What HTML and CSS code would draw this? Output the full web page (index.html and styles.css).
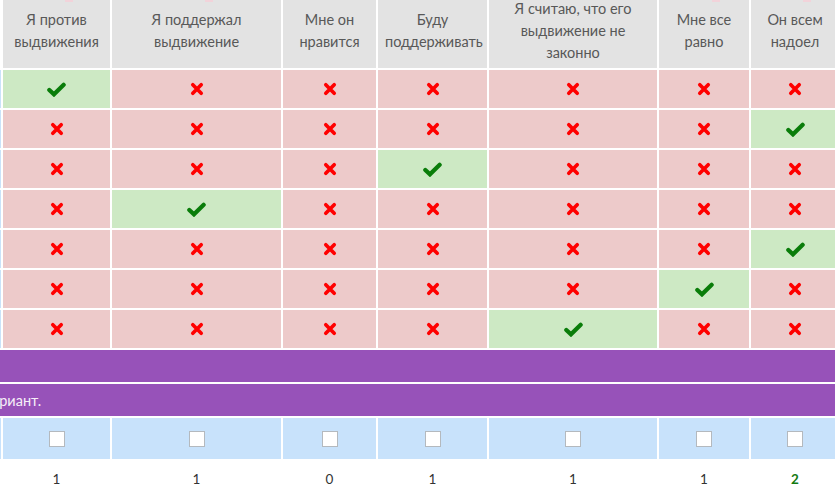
FILE: index.html
```html
<!DOCTYPE html>
<html lang="ru">
<head>
<meta charset="utf-8">
<title>Голосование</title>
<link rel="stylesheet" href="styles.css">
</head>
<body>
<div class="viewport">
<table class="poll">
  <colgroup>
    <col class="c-label">
    <col class="c1"><col class="c2"><col class="c3"><col class="c4"><col class="c5"><col class="c6"><col class="c7">
  </colgroup>
  <thead>
    <tr>
      <th class="label-head"></th>
      <th><div class="mark"><span></span></div>Я против выдвижения</th>
      <th><div class="mark"><span></span></div>Я поддержал выдвижение</th>
      <th>Мне он нравится</th>
      <th>Буду поддерживать</th>
      <th>Я считаю, что его выдвижение не законно</th>
      <th><div class="mark"><span></span></div>Мне все равно</th>
      <th><div class="mark"><span></span></div>Он всем надоел</th>
    </tr>
  </thead>
  <tbody>
    <tr>
      <td class="label"></td>
      <td class="yes"><svg class="ic-check" viewBox="0 0 18 14"><path d="M2.2 7.4 L6.6 11.6 L15.8 2.6"/></svg></td>
      <td class="no"><svg class="ic-x" viewBox="0 0 14 14"><path d="M2.8 2.8 L11.2 11.2 M11.2 2.8 L2.8 11.2"/></svg></td>
      <td class="no"><svg class="ic-x" viewBox="0 0 14 14"><path d="M2.8 2.8 L11.2 11.2 M11.2 2.8 L2.8 11.2"/></svg></td>
      <td class="no"><svg class="ic-x" viewBox="0 0 14 14"><path d="M2.8 2.8 L11.2 11.2 M11.2 2.8 L2.8 11.2"/></svg></td>
      <td class="no"><svg class="ic-x" viewBox="0 0 14 14"><path d="M2.8 2.8 L11.2 11.2 M11.2 2.8 L2.8 11.2"/></svg></td>
      <td class="no"><svg class="ic-x" viewBox="0 0 14 14"><path d="M2.8 2.8 L11.2 11.2 M11.2 2.8 L2.8 11.2"/></svg></td>
      <td class="no"><svg class="ic-x" viewBox="0 0 14 14"><path d="M2.8 2.8 L11.2 11.2 M11.2 2.8 L2.8 11.2"/></svg></td>
    </tr>
    <tr>
      <td class="label"></td>
      <td class="no"><svg class="ic-x" viewBox="0 0 14 14"><path d="M2.8 2.8 L11.2 11.2 M11.2 2.8 L2.8 11.2"/></svg></td>
      <td class="no"><svg class="ic-x" viewBox="0 0 14 14"><path d="M2.8 2.8 L11.2 11.2 M11.2 2.8 L2.8 11.2"/></svg></td>
      <td class="no"><svg class="ic-x" viewBox="0 0 14 14"><path d="M2.8 2.8 L11.2 11.2 M11.2 2.8 L2.8 11.2"/></svg></td>
      <td class="no"><svg class="ic-x" viewBox="0 0 14 14"><path d="M2.8 2.8 L11.2 11.2 M11.2 2.8 L2.8 11.2"/></svg></td>
      <td class="no"><svg class="ic-x" viewBox="0 0 14 14"><path d="M2.8 2.8 L11.2 11.2 M11.2 2.8 L2.8 11.2"/></svg></td>
      <td class="no"><svg class="ic-x" viewBox="0 0 14 14"><path d="M2.8 2.8 L11.2 11.2 M11.2 2.8 L2.8 11.2"/></svg></td>
      <td class="yes"><svg class="ic-check" viewBox="0 0 18 14"><path d="M2.2 7.4 L6.6 11.6 L15.8 2.6"/></svg></td>
    </tr>
    <tr>
      <td class="label"></td>
      <td class="no"><svg class="ic-x" viewBox="0 0 14 14"><path d="M2.8 2.8 L11.2 11.2 M11.2 2.8 L2.8 11.2"/></svg></td>
      <td class="no"><svg class="ic-x" viewBox="0 0 14 14"><path d="M2.8 2.8 L11.2 11.2 M11.2 2.8 L2.8 11.2"/></svg></td>
      <td class="no"><svg class="ic-x" viewBox="0 0 14 14"><path d="M2.8 2.8 L11.2 11.2 M11.2 2.8 L2.8 11.2"/></svg></td>
      <td class="yes"><svg class="ic-check" viewBox="0 0 18 14"><path d="M2.2 7.4 L6.6 11.6 L15.8 2.6"/></svg></td>
      <td class="no"><svg class="ic-x" viewBox="0 0 14 14"><path d="M2.8 2.8 L11.2 11.2 M11.2 2.8 L2.8 11.2"/></svg></td>
      <td class="no"><svg class="ic-x" viewBox="0 0 14 14"><path d="M2.8 2.8 L11.2 11.2 M11.2 2.8 L2.8 11.2"/></svg></td>
      <td class="no"><svg class="ic-x" viewBox="0 0 14 14"><path d="M2.8 2.8 L11.2 11.2 M11.2 2.8 L2.8 11.2"/></svg></td>
    </tr>
    <tr>
      <td class="label"></td>
      <td class="no"><svg class="ic-x" viewBox="0 0 14 14"><path d="M2.8 2.8 L11.2 11.2 M11.2 2.8 L2.8 11.2"/></svg></td>
      <td class="yes"><svg class="ic-check" viewBox="0 0 18 14"><path d="M2.2 7.4 L6.6 11.6 L15.8 2.6"/></svg></td>
      <td class="no"><svg class="ic-x" viewBox="0 0 14 14"><path d="M2.8 2.8 L11.2 11.2 M11.2 2.8 L2.8 11.2"/></svg></td>
      <td class="no"><svg class="ic-x" viewBox="0 0 14 14"><path d="M2.8 2.8 L11.2 11.2 M11.2 2.8 L2.8 11.2"/></svg></td>
      <td class="no"><svg class="ic-x" viewBox="0 0 14 14"><path d="M2.8 2.8 L11.2 11.2 M11.2 2.8 L2.8 11.2"/></svg></td>
      <td class="no"><svg class="ic-x" viewBox="0 0 14 14"><path d="M2.8 2.8 L11.2 11.2 M11.2 2.8 L2.8 11.2"/></svg></td>
      <td class="no"><svg class="ic-x" viewBox="0 0 14 14"><path d="M2.8 2.8 L11.2 11.2 M11.2 2.8 L2.8 11.2"/></svg></td>
    </tr>
    <tr>
      <td class="label"></td>
      <td class="no"><svg class="ic-x" viewBox="0 0 14 14"><path d="M2.8 2.8 L11.2 11.2 M11.2 2.8 L2.8 11.2"/></svg></td>
      <td class="no"><svg class="ic-x" viewBox="0 0 14 14"><path d="M2.8 2.8 L11.2 11.2 M11.2 2.8 L2.8 11.2"/></svg></td>
      <td class="no"><svg class="ic-x" viewBox="0 0 14 14"><path d="M2.8 2.8 L11.2 11.2 M11.2 2.8 L2.8 11.2"/></svg></td>
      <td class="no"><svg class="ic-x" viewBox="0 0 14 14"><path d="M2.8 2.8 L11.2 11.2 M11.2 2.8 L2.8 11.2"/></svg></td>
      <td class="no"><svg class="ic-x" viewBox="0 0 14 14"><path d="M2.8 2.8 L11.2 11.2 M11.2 2.8 L2.8 11.2"/></svg></td>
      <td class="no"><svg class="ic-x" viewBox="0 0 14 14"><path d="M2.8 2.8 L11.2 11.2 M11.2 2.8 L2.8 11.2"/></svg></td>
      <td class="yes"><svg class="ic-check" viewBox="0 0 18 14"><path d="M2.2 7.4 L6.6 11.6 L15.8 2.6"/></svg></td>
    </tr>
    <tr>
      <td class="label"></td>
      <td class="no"><svg class="ic-x" viewBox="0 0 14 14"><path d="M2.8 2.8 L11.2 11.2 M11.2 2.8 L2.8 11.2"/></svg></td>
      <td class="no"><svg class="ic-x" viewBox="0 0 14 14"><path d="M2.8 2.8 L11.2 11.2 M11.2 2.8 L2.8 11.2"/></svg></td>
      <td class="no"><svg class="ic-x" viewBox="0 0 14 14"><path d="M2.8 2.8 L11.2 11.2 M11.2 2.8 L2.8 11.2"/></svg></td>
      <td class="no"><svg class="ic-x" viewBox="0 0 14 14"><path d="M2.8 2.8 L11.2 11.2 M11.2 2.8 L2.8 11.2"/></svg></td>
      <td class="no"><svg class="ic-x" viewBox="0 0 14 14"><path d="M2.8 2.8 L11.2 11.2 M11.2 2.8 L2.8 11.2"/></svg></td>
      <td class="yes"><svg class="ic-check" viewBox="0 0 18 14"><path d="M2.2 7.4 L6.6 11.6 L15.8 2.6"/></svg></td>
      <td class="no"><svg class="ic-x" viewBox="0 0 14 14"><path d="M2.8 2.8 L11.2 11.2 M11.2 2.8 L2.8 11.2"/></svg></td>
    </tr>
    <tr>
      <td class="label"></td>
      <td class="no"><svg class="ic-x" viewBox="0 0 14 14"><path d="M2.8 2.8 L11.2 11.2 M11.2 2.8 L2.8 11.2"/></svg></td>
      <td class="no"><svg class="ic-x" viewBox="0 0 14 14"><path d="M2.8 2.8 L11.2 11.2 M11.2 2.8 L2.8 11.2"/></svg></td>
      <td class="no"><svg class="ic-x" viewBox="0 0 14 14"><path d="M2.8 2.8 L11.2 11.2 M11.2 2.8 L2.8 11.2"/></svg></td>
      <td class="no"><svg class="ic-x" viewBox="0 0 14 14"><path d="M2.8 2.8 L11.2 11.2 M11.2 2.8 L2.8 11.2"/></svg></td>
      <td class="yes"><svg class="ic-check" viewBox="0 0 18 14"><path d="M2.2 7.4 L6.6 11.6 L15.8 2.6"/></svg></td>
      <td class="no"><svg class="ic-x" viewBox="0 0 14 14"><path d="M2.8 2.8 L11.2 11.2 M11.2 2.8 L2.8 11.2"/></svg></td>
      <td class="no"><svg class="ic-x" viewBox="0 0 14 14"><path d="M2.8 2.8 L11.2 11.2 M11.2 2.8 L2.8 11.2"/></svg></td>
    </tr>
    <tr class="band">
      <td colspan="8"></td>
    </tr>
    <tr class="band">
      <td colspan="8" class="band-text">Выберите один вариант.</td>
    </tr>
    <tr class="choose">
      <td class="label"></td>
      <td><input type="checkbox" class="box"></td>
      <td><input type="checkbox" class="box"></td>
      <td><input type="checkbox" class="box"></td>
      <td><input type="checkbox" class="box"></td>
      <td><input type="checkbox" class="box"></td>
      <td><input type="checkbox" class="box"></td>
      <td><input type="checkbox" class="box"></td>
    </tr>
    <tr class="totals">
      <td class="blank"></td>
      <td>1</td><td>1</td><td>0</td><td>1</td><td>1</td><td>1</td><td class="lead">2</td>
    </tr>
  </tbody>
</table>
</div>
</body>
</html>
```

FILE: styles.css
```css
html, body {
  margin: 0;
  padding: 0;
  background: #ffffff;
  overflow: hidden;
}

.viewport {
  width: 835px;
  height: 493px;
  overflow: hidden;
}

.poll {
  border-collapse: separate;
  border-spacing: 2px;
  table-layout: fixed;
  width: 962px;
  margin-top: -8px;
  margin-left: -121px;
  font-family: "Lato", "Roboto", "Noto Sans", sans-serif;
  font-size: 14.5px;
  color: #555555;
}

.c-label { width: 120px; }
.c1 { width: 107px; }
.c2 { width: 169px; }
.c3 { width: 93px; }
.c4 { width: 109px; }
.c5 { width: 168px; }
.c6 { width: 90px; }
.c7 { width: 88px; }

.poll th {
  background: #e3e3e3;
  font-weight: normal;
  line-height: 22px;
  height: 66px;
  padding: 4px 7px;
  text-align: center;
  vertical-align: middle;
  color: #585858;
}

.poll th.label-head {
  background: transparent;
}

.mark {
  display: flex;
  justify-content: center;
  align-items: flex-start;
  height: 0;
  margin: 0;
}

.mark span {
  display: block;
  width: 8px;
  height: 2px;
  margin-top: -9px;
  margin-left: 24px;
  background: #f2d3da;
}

.poll td {
  height: 38px;
  padding: 0;
  text-align: center;
  vertical-align: middle;
}

.poll td.label {
  background: #c9e2f9;
}

.poll td.yes { background: #cde9c4; }
.poll td.no { background: #edcaca; }

.ic-check {
  display: block;
  margin: 0 auto;
  width: 19px;
  height: 15px;
}
.ic-check path {
  fill: none;
  stroke: #0a7d0a;
  stroke-width: 4;
  stroke-linecap: round;
  stroke-linejoin: miter;
}

.ic-x {
  display: block;
  margin: 0 auto;
  width: 14px;
  height: 14px;
}
.ic-x path {
  fill: none;
  stroke: #ff0000;
  stroke-width: 3.7;
  stroke-linecap: round;
}

.poll tr.band td {
  background: #9752b9;
  height: 32px;
  text-align: left;
  color: #f6eef8;
  padding: 0;
  text-indent: -4px;
  font-size: 14.5px;
}

.poll tr.choose td {
  background: #c8e2fb;
  height: 41px;
}

.box {
  appearance: none;
  -webkit-appearance: none;
  display: block;
  margin: 0 auto;
  width: 16px;
  height: 16px;
  background: #ffffff;
  border: 1px solid #b4b9be;
  border-radius: 0;
}

.poll tr.totals td {
  height: 36px;
  font-size: 13.5px;
  color: #333333;
  background: #ffffff;
}

.poll tr.totals td.lead {
  color: #137a13;
  font-weight: bold;
}
```
